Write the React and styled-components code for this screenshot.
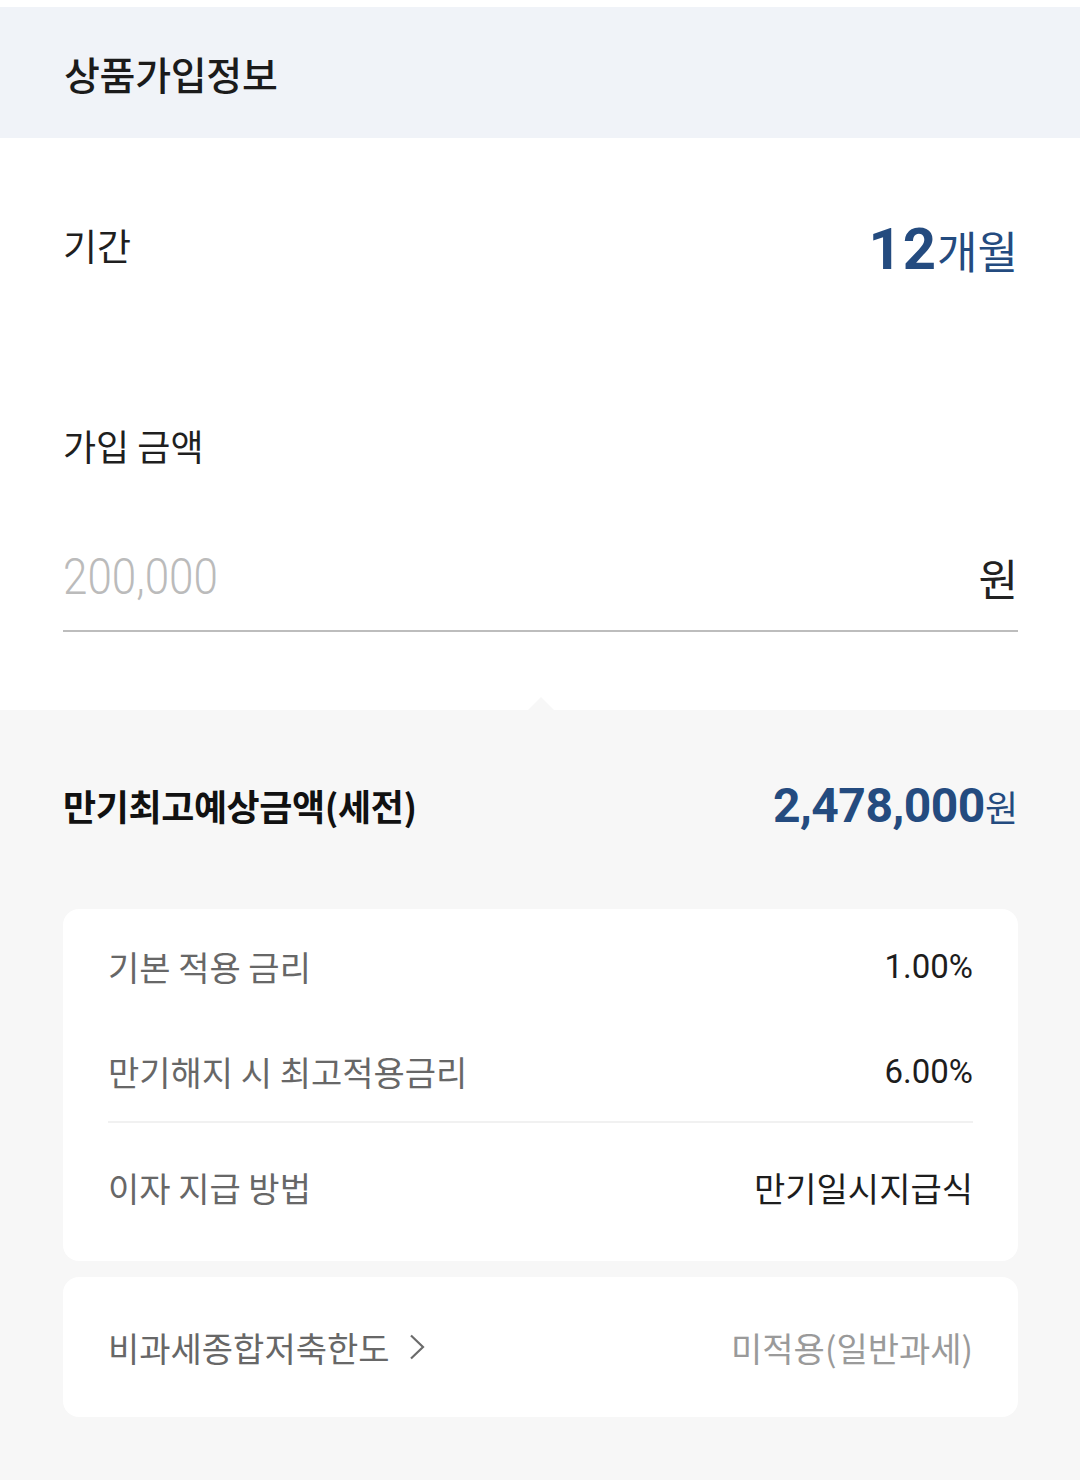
import React from "react";
import styled, { createGlobalStyle } from "styled-components";

const Global = createGlobalStyle`
  html, body { margin: 0; padding: 0; background: #ffffff; }
  body {
    font-family: "Roboto", "Noto Sans CJK KR", sans-serif;
    color: #222222;
    -webkit-font-smoothing: antialiased;
  }
  * { box-sizing: border-box; }
`;

const KR = `"Noto Sans CJK KR", "Noto Sans", sans-serif`;
const NUM = `"Roboto", "Noto Sans CJK KR", sans-serif`;
const NAVY = "#244b7f";

const Page = styled.div`
  width: 1080px;
  min-height: 1480px;
  padding-top: 7px;
  background: #ffffff;
  display: flex;
  flex-direction: column;
`;

const Header = styled.header`
  height: 131px;
  background: #f0f3f8;
  display: flex;
  align-items: center;
  padding: 0 64px;
`;

const Title = styled.h1`
  margin: 0;
  font-family: ${KR};
  font-size: 39px;
  font-weight: 500;
  color: #1b1b1b;
  letter-spacing: -0.3px;
`;

const Form = styled.section`
  padding: 0 62px 0 63px;
  margin-bottom: 78px;
`;

const PeriodRow = styled.div`
  height: 214px;
  display: flex;
  align-items: center;
  justify-content: space-between;
`;

const Label = styled.div`
  font-family: ${KR};
  font-size: ${(p) => p.$size || 36}px;
  font-weight: 400;
  color: #1f1f1f;
  line-height: 50px;
  margin-top: ${(p) => p.$top || 0}px;
`;

const PeriodValue = styled.div`
  display: flex;
  align-items: baseline;
  color: ${NAVY};
  margin-top: 8px;
`;

const BigNum = styled.span`
  font-family: ${NUM};
  font-size: 58px;
  font-weight: 700;
  letter-spacing: 1px;
`;

const Unit = styled.span`
  font-family: ${KR};
  font-size: ${(p) => p.$size}px;
  font-weight: 400;
  color: ${(p) => p.$color || NAVY};
`;

const InputRow = styled.div`
  margin-top: 77px;
  height: 60px;
  display: flex;
  align-items: center;
  justify-content: space-between;
`;

const Underline = styled.div`
  margin-top: 23px;
  height: 2px;
  background: #bdbdbd;
`;

const Placeholder = styled.span`
  display: inline-block;
  font-family: ${NUM};
  font-size: 50px;
  font-weight: 300;
  color: #bbbbbb;
  transform: scaleX(0.88);
  transform-origin: left center;
`;

const Summary = styled.section`
  position: relative;
  flex: 1;
  background: #f7f7f7;
  padding: 70px 62px 64px 63px;
`;

const Notch = styled.div`
  position: absolute;
  top: -13px;
  left: 528px;
  width: 0;
  height: 0;
  border-left: 13px solid transparent;
  border-right: 13px solid transparent;
  border-bottom: 13px solid #f7f7f7;
`;

const SummaryRow = styled.div`
  height: 50px;
  display: flex;
  align-items: center;
  justify-content: space-between;
  margin-bottom: 79px;
`;

const SummaryLabel = styled.div`
  font-family: ${KR};
  font-size: 36px;
  font-weight: 700;
  color: #111111;
  letter-spacing: -0.4px;
`;

const Amount = styled.div`
  display: flex;
  align-items: baseline;
  color: ${NAVY};
`;

const AmountNum = styled.span`
  font-family: ${NUM};
  font-size: 48px;
  font-weight: 700;
  letter-spacing: -0.5px;
`;

const Card = styled.div`
  background: #ffffff;
  border-radius: 16px;
  padding: ${(p) => p.$pad};
  margin-bottom: 16px;
`;

const InfoRow = styled.div`
  height: 50px;
  display: flex;
  align-items: center;
  justify-content: space-between;
  margin-top: ${(p) => p.$top || 0}px;
`;

const InfoLabel = styled.div`
  display: flex;
  align-items: center;
  gap: 19px;
  font-family: ${KR};
  font-size: 34px;
  color: #676767;
`;

const InfoValue = styled.div`
  font-family: ${(p) => (p.$num ? NUM : KR)};
  font-size: ${(p) => (p.$num ? 33 : 34)}px;
  color: ${(p) => p.$color || "#1d1d1d"};
`;

const Divider = styled.div`
  height: 2px;
  background: #f1f1f1;
  margin-top: 25px;
  margin-bottom: 39px;
`;

const Chevron = () => (
  <svg width="16" height="26" viewBox="0 0 16 26" fill="none">
    <path d="M2 1.5 L14 13 L2 24.5" stroke="#6b6b6b" strokeWidth="2.2" strokeLinejoin="miter" />
  </svg>
);

export default function App() {
  return (
    <>
      <Global />
      <Page>
        <Header>
          <Title>상품가입정보</Title>
        </Header>
        <Form>
          <PeriodRow>
            <Label $size={37}>기간</Label>
            <PeriodValue>
              <BigNum>12</BigNum>
              <Unit $size={44}>개월</Unit>
            </PeriodValue>
          </PeriodRow>
          <Label $top={68}>가입 금액</Label>
          <InputRow>
            <Placeholder>200,000</Placeholder>
            <Unit $size={43} $color="#222222">원</Unit>
          </InputRow>
          <Underline />
        </Form>
        <Summary>
          <Notch />
          <SummaryRow>
            <SummaryLabel>만기최고예상금액(세전)</SummaryLabel>
            <Amount>
              <AmountNum>2,478,000</AmountNum>
              <Unit $size={36}>원</Unit>
            </Amount>
          </SummaryRow>
          <Card $pad="32px 45px 49px 45px">
            <InfoRow>
              <InfoLabel>기본 적용 금리</InfoLabel>
              <InfoValue $num>1.00%</InfoValue>
            </InfoRow>
            <InfoRow $top={55}>
              <InfoLabel>만기해지 시 최고적용금리</InfoLabel>
              <InfoValue $num>6.00%</InfoValue>
            </InfoRow>
            <Divider />
            <InfoRow>
              <InfoLabel>이자 지급 방법</InfoLabel>
              <InfoValue>만기일시지급식</InfoValue>
            </InfoRow>
          </Card>
          <Card $pad="45px 45px">
            <InfoRow>
              <InfoLabel>
                비과세종합저축한도
                <Chevron />
              </InfoLabel>
              <InfoValue $color="#9a9a9a">미적용(일반과세)</InfoValue>
            </InfoRow>
          </Card>
        </Summary>
      </Page>
    </>
  );
}
